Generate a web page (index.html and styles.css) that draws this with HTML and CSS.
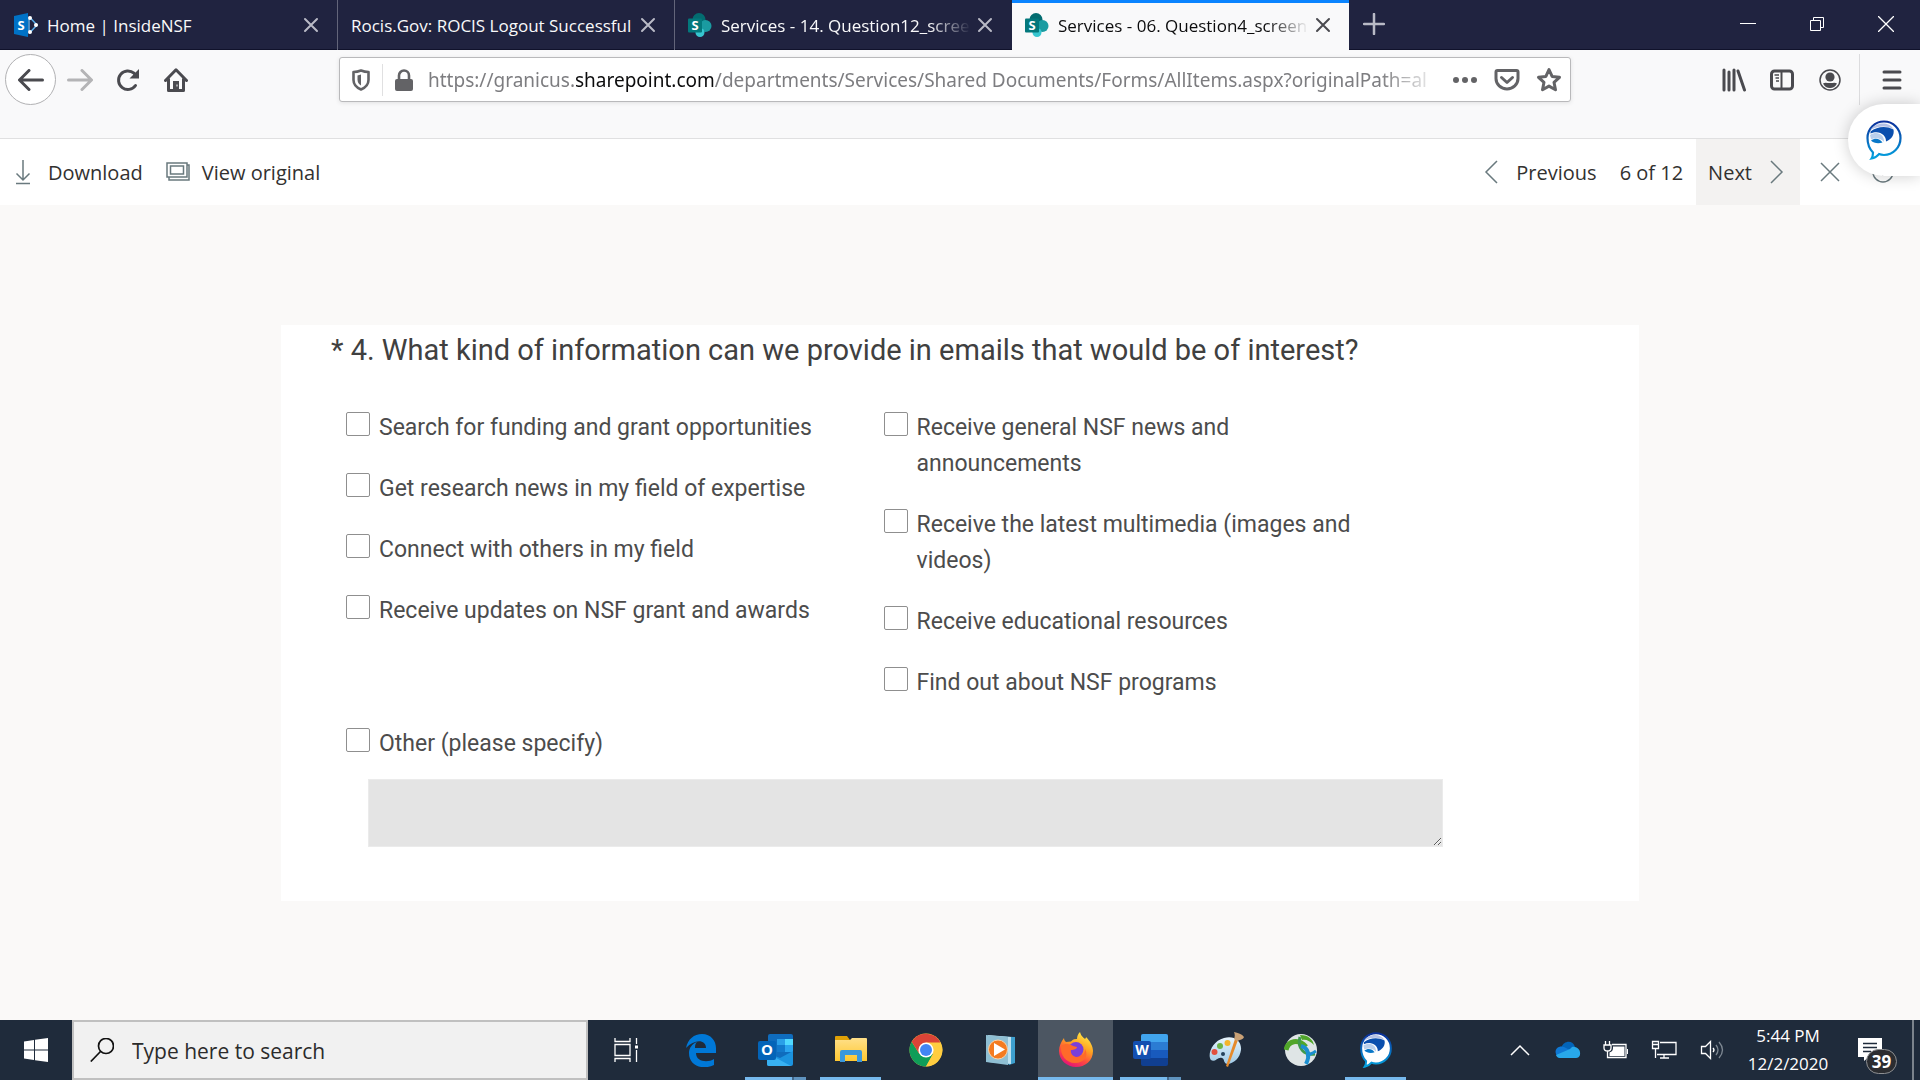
FILE: index.html
```html
<!DOCTYPE html>
<html lang="en">
<head>
<meta charset="utf-8">
<meta name="viewport" content="width=device-width, initial-scale=1">
<title>Services - 06. Question4_screen</title>
<link rel="stylesheet" href="styles.css">
</head>
<body>
<svg class="sprite" aria-hidden="true">
  <defs>
    <linearGradient id="bubble-ring" x1="0" y1="0" x2="0" y2="1"><stop offset="0" stop-color="#0b2f9b"/><stop offset="1" stop-color="#04a3e0"/></linearGradient>
    <linearGradient id="fox" x1="0.8" y1="0" x2="0.3" y2="1"><stop offset="0" stop-color="#fff04a"/><stop offset="0.4" stop-color="#ffa321"/><stop offset="0.7" stop-color="#ff4a40"/><stop offset="1" stop-color="#e2107b"/></linearGradient>
    <linearGradient id="folder" x1="0" y1="0" x2="0" y2="1"><stop offset="0" stop-color="#ffe08a"/><stop offset="1" stop-color="#ffc830"/></linearGradient>
    <linearGradient id="palette" x1="0" y1="0" x2="0" y2="1"><stop offset="0" stop-color="#e8f5fd"/><stop offset="1" stop-color="#9fc9e6"/></linearGradient>
  </defs>
  <symbol id="sharepoint" viewBox="0 0 24 24">
    <circle cx="11" cy="6.500" r="6.500" fill="#036c70"/><circle cx="17.500" cy="13" r="6" fill="#1a9ba1"/><circle cx="12" cy="19.500" r="4.500" fill="#37c6d0"/>
    <rect x="0" y="5.500" width="14" height="14" rx="1" fill="#03787c"/>
  </symbol>
  <symbol id="close" viewBox="0 0 16 16"><path d="M2 2l12 12M14 2L2 14" fill="none" stroke="currentColor" stroke-width="2" stroke-linecap="round"/></symbol>
  <symbol id="bubble" viewBox="0 0 36 40">
    <path d="M18 1.500C27 1.500 34.500 8.500 34.500 18S27 35 18 35c-2 0-3.600-.300-5-.900C11 36.500 8.600 38 5.500 38.500c1-1.500 1.500-3.500 1.500-6C3.500 29 1.500 24 1.500 18 1.500 8.500 9 1.500 18 1.500z" fill="#fff" stroke="url(#bubble-ring)" stroke-width="2.200"/>
    <path d="M4.500 10C8 3 22 0 27.500 9 20 5 11 6 4.500 10z" fill="#b4c1e6"/>
    <path d="M4.500 11.500C11 6.500 20 5.500 27.500 9.500c1 5-1.500 9.500-7.500 12C20.500 15 13 9.500 4.500 13.500z" fill="#0b4fae"/>
    <path d="M4 15c7-4.500 14.500-.500 14 7-3.500-4.500-9-4.500-13-2.500z" fill="#b9cfec"/>
    <path d="M5 20.500c4-3 9-2 11.500 2-4 1.500-9 .800-11.500-2z" fill="#0a78c8"/>
  </symbol>
</svg>

<header class="titlebar">
  <div class="tabs" role="tablist" aria-label="Open tabs">
    <div class="tab">
      <svg class="favicon" viewBox="0 0 24 24" aria-hidden="true"><path d="M0 3L14 0v24L0 21z" fill="#0072c6"/><path d="M15 3.500l8 8.500-8 8.500M15 6v12" fill="none" stroke="#5ab0ee" stroke-width="1.500"/><circle cx="16" cy="5" r="2" fill="#fff"/><circle cx="22" cy="12" r="2" fill="#fff"/><circle cx="16" cy="19" r="2" fill="#fff"/><text x="7" y="17" text-anchor="middle" class="glyph-s">S</text></svg>
      <button class="tab-title" role="tab" aria-selected="false">Home | InsideNSF</button>
      <button class="tab-close" aria-label="Close tab"><svg width="16" height="16"><use href="#close"/></svg></button>
    </div>
    <div class="tab">
      <button class="tab-title" role="tab" aria-selected="false">Rocis.Gov: ROCIS Logout Successful</button>
      <button class="tab-close" aria-label="Close tab"><svg width="16" height="16"><use href="#close"/></svg></button>
    </div>
    <div class="tab">
      <svg class="favicon" aria-hidden="true"><use href="#sharepoint"/><text x="7" y="17" text-anchor="middle" class="glyph-s">S</text></svg>
      <button class="tab-title fade" role="tab" aria-selected="false">Services - 14. Question12_scree</button>
      <button class="tab-close" aria-label="Close tab"><svg width="16" height="16"><use href="#close"/></svg></button>
    </div>
    <div class="tab active">
      <svg class="favicon" aria-hidden="true"><use href="#sharepoint"/><text x="7" y="17" text-anchor="middle" class="glyph-s">S</text></svg>
      <button class="tab-title fade" role="tab" aria-selected="true">Services - 06. Question4_screen</button>
      <button class="tab-close" aria-label="Close tab"><svg width="16" height="16"><use href="#close"/></svg></button>
    </div>
  </div>
  <button class="new-tab" aria-label="New tab"><svg width="22" height="22" viewBox="0 0 22 22"><path d="M11 1v20M1 11h20" stroke="currentColor" stroke-width="2.500" stroke-linecap="round"/></svg></button>
  <div class="window-buttons">
    <button aria-label="Minimize"><svg width="16" height="16" viewBox="0 0 16 16"><path d="M0 7.500h16" stroke="#fff"/></svg></button>
    <button aria-label="Restore"><svg width="16" height="16" viewBox="0 0 16 16"><path d="M1.500 4.500h10v10h-10zM4.500 4V1.500h10v10H12" fill="none" stroke="#fff"/></svg></button>
    <button aria-label="Close window"><svg width="16" height="16" viewBox="0 0 16 16"><path d="M0 0l16 16M16 0L0 16" stroke="#fff" stroke-width="1.300"/></svg></button>
  </div>
</header>

<nav class="navbar" aria-label="Browser toolbar">
  <div class="nav-left">
    <button class="back" aria-label="Back"><svg width="26" height="22" viewBox="0 0 26 22"><path d="M11 1.500L1.500 11l9.500 9.500M2 11h22.500" class="line"/></svg></button>
    <button class="tool dim" aria-label="Forward"><svg width="26" height="22" viewBox="0 0 26 22"><path d="M15 1.500l9.500 9.500-9.500 9.500M24 11H1.500" class="line"/></svg></button>
    <button class="tool" aria-label="Reload"><svg width="24" height="24" viewBox="0 0 24 24"><path d="M19.500 17.500A9.300 9.300 0 1 1 18 5.200L21 8.500" class="line"/><path d="M23 1v9.500h-9.500z" fill="currentColor"/></svg></button>
    <button class="tool" aria-label="Home"><svg width="24" height="24" viewBox="0 0 24 24"><path d="M1.500 12.500L12 1.800l10.500 10.700M4.500 11v11.500h15V11" class="line"/><path d="M9 13h6v9H9z" fill="currentColor"/><path d="M12.500 17.500h1" stroke="#fff" stroke-width="2"/></svg></button>
  </div>
  <div class="address">
    <button class="addr-btn" aria-label="Tracking protection"><svg width="18" height="22" viewBox="0 0 18 22"><path d="M9 1.500c2.500 1 5 1.500 7.500 1.500v8c0 4-3 7.500-7.500 9.500C4.500 18.500 1.500 15 1.500 11V3C4 3 6.500 2.500 9 1.500z" fill="none" stroke="currentColor" stroke-width="2.600" stroke-linejoin="round"/><path d="M9 5.500v11c-2.500-1.500-3.500-3.500-3.500-6v-4z" fill="currentColor"/></svg></button>
    <span class="addr-sep"></span>
    <button class="addr-btn" aria-label="Site security"><svg width="18" height="22" viewBox="0 0 18 22"><rect y="10" width="18" height="12" rx="2" fill="currentColor"/><path d="M4 11V6.500a5 5 0 0 1 10 0V11" fill="none" stroke="currentColor" stroke-width="2.600"/></svg></button>
    <div class="url" role="textbox" aria-label="Address" tabindex="0">https://granicus.<b>sharepoint.com</b>/departments/Services/Shared Documents/Forms/AllItems.aspx?originalPath=al</div>
    <button class="addr-btn" aria-label="Page actions"><svg width="26" height="8" viewBox="0 0 26 8"><g fill="currentColor"><circle cx="4" cy="4" r="3"/><circle cx="13" cy="4" r="3"/><circle cx="22" cy="4" r="3"/></g></svg></button>
    <button class="addr-btn" aria-label="Save to Pocket"><svg width="26" height="24" viewBox="0 0 26 24"><path d="M3.500 2.500h19a1.500 1.500 0 0 1 1.500 1.500v6.500a11 10.500 0 0 1-22 0V4a1.500 1.500 0 0 1 1.500-1.500z" class="line"/><path d="M7.500 9.500l5.500 5 5.500-5" class="line"/></svg></button>
    <button class="addr-btn" aria-label="Bookmark"><svg width="26" height="26" viewBox="0 0 26 26"><path d="M13 2.500l3.100 6.900 7.400.9-5.500 5 1.500 7.500L13 19.100l-6.500 3.700L8 15.300l-5.500-5 7.400-.9z" class="line"/></svg></button>
  </div>
  <div class="nav-right">
    <button class="tool" aria-label="Library"><svg width="24" height="24" viewBox="0 0 24 24"><path d="M2 2v20M7 4v18M12 2v20M16 3l6.500 19" class="line"/></svg></button>
    <button class="tool" aria-label="Sidebars"><svg width="24" height="24" viewBox="0 0 24 24"><rect x="1.500" y="3" width="21" height="18" rx="3" class="line"/><path d="M11.500 3v18" stroke="currentColor" stroke-width="2"/><path d="M4.500 7h4.500M5.500 10h3.500M6 13h3" stroke="currentColor" stroke-width="1.500"/></svg></button>
    <button class="tool" aria-label="Account"><svg width="24" height="24" viewBox="0 0 24 24"><circle cx="12" cy="12" r="10" fill="none" stroke="currentColor" stroke-width="1.500"/><circle cx="12" cy="9" r="4.600" fill="currentColor"/><path d="M5 15.500c2-1.500 4-.5 7-.5s5-1 7 .5C17.500 18.500 15 20 12 20s-5.500-1.500-7-4.500z" fill="currentColor"/></svg></button>
    <span class="nav-sep"></span>
    <button class="tool" aria-label="Menu"><svg width="20" height="20" viewBox="0 0 20 20"><path d="M2 2h16M2 10h16M2 18h16" class="line"/></svg></button>
  </div>
</nav>

<div class="commands" role="toolbar" aria-label="File commands">
  <button class="command"><svg width="24" height="26" viewBox="0 0 24 26"><path d="M11 1v20M4.500 14.500L11 21l6.500-6.500M4 24.500h14" class="thin"/></svg>Download</button>
  <button class="command"><svg width="24" height="24" viewBox="0 0 24 24"><path d="M1 3h20v14H1zM4.500 6h13v8h-13zM3 17v3h20V5h-2" class="thin"/></svg>View original</button>
  <div class="pager">
    <button class="command"><svg width="24" height="24" viewBox="0 0 24 24"><path d="M17 1L6 12l11 11" class="thin"/></svg>Previous</button>
    <span class="count">6 of 12</span>
    <button class="command next">Next<svg width="24" height="24" viewBox="0 0 24 24"><path d="M7 1l11 11L7 23" class="thin"/></svg></button>
    <button class="command small" aria-label="Close preview"><svg width="20" height="20" viewBox="0 0 20 20"><path d="M1 1l18 18M19 1L1 19" class="thin"/></svg></button>
    <button class="command small" aria-label="Information"><svg width="22" height="22" viewBox="0 0 22 22"><circle cx="11" cy="11" r="10" class="thin"/><path d="M11 9v6" class="thin"/></svg></button>
  </div>
</div>

<main class="viewer">
  <form class="survey">
    <h1 class="question">* 4. What kind of information can we provide in emails that would be of interest?</h1>
    <div class="answers">
      <div class="columns">
        <div class="column">
          <label class="option"><input type="checkbox"><span>Search for funding and grant opportunities</span></label>
          <label class="option"><input type="checkbox"><span>Get research news in my field of expertise</span></label>
          <label class="option"><input type="checkbox"><span>Connect with others in my field</span></label>
          <label class="option"><input type="checkbox"><span>Receive updates on NSF grant and awards</span></label>
        </div>
        <div class="column">
          <label class="option"><input type="checkbox"><span>Receive general NSF news and announcements</span></label>
          <label class="option"><input type="checkbox"><span>Receive the latest multimedia (images and videos)</span></label>
          <label class="option"><input type="checkbox"><span>Receive educational resources</span></label>
          <label class="option"><input type="checkbox"><span>Find out about NSF programs</span></label>
        </div>
      </div>
      <label class="option"><input type="checkbox"><span id="other">Other (please specify)</span></label>
      <textarea class="other-text" aria-labelledby="other"></textarea>
    </div>
  </form>
</main>

<footer class="taskbar">
  <button class="start" aria-label="Start"><svg width="24" height="24" viewBox="0 0 24 24"><path d="M0 3.500L10 2v9.500H0zM11 1.800L24 0v11.500H11zM0 12.500h10V22L0 20.500zM11 12.500h13V24l-13-1.800z" fill="#fff"/></svg></button>
  <label class="search">
    <svg width="24" height="24" viewBox="0 0 24 24" aria-hidden="true"><circle cx="16" cy="8" r="7.500" fill="none" stroke="#111" stroke-width="1.700"/><path d="M10.500 13.500L.8 23.500" stroke="#111" stroke-width="1.700"/></svg>
    <input type="search" placeholder="Type here to search" aria-label="Type here to search">
  </label>
  <div class="apps">
    <button class="app" aria-label="Task View"><svg width="26" height="26" viewBox="0 0 26 26"><path d="M2 1v3.500h15V1M2 7.500h15v11H2zM2 25v-3.500h15V25M23.500 1v6M23.500 13v12" fill="none" stroke="#fff" stroke-width="1.300"/><path d="M22 8.500h3v3h-3z" fill="#fff"/></svg></button>
    <button class="app" aria-label="Edge"><svg width="32" height="34" viewBox="0 0 32 34"><path d="M1 15C3 6 9 1 17 1c9 0 14 7 14 14v5H11c0 9 12 10 18 6v6c-10 5-25 2-25-12 0-5 3-9 8-11-2 2-2 4-2 6h11c0-9-12-9-20 0z" fill="#0078d7"/></svg></button>
    <button class="app running multi" aria-label="Outlook"><svg width="36" height="34" viewBox="0 0 36 34"><rect x="10" y="1" width="25" height="31" rx="2" fill="#0f6cbd"/><path d="M19 6h8v6h-8z" fill="#2a9fe8"/><path d="M27 6h8v6h-8z" fill="#50d9ff"/><path d="M19 12h8v7h-8z" fill="#1279cc"/><path d="M27 12h8v7h-8z" fill="#2aa4ef"/><path d="M9 20l13 5 13-7v13q0 2-2 2H11q-2 0-2-2z" fill="#1b93df"/><path d="M9 20l24 13h-22q-2 0-2-2z" fill="#38b1f2"/><rect y="8" width="18" height="19" rx="2" fill="#0364b8"/><text x="9" y="22" text-anchor="middle" class="glyph-l">O</text></svg></button>
    <button class="app running" aria-label="File Explorer"><svg width="34" height="30" viewBox="0 0 34 30"><path d="M1 2q0-1 1-1h11l3 4H1z" fill="#e0a106"/><path d="M1 5h15l2-2h14q1 0 1 1v22H1z" fill="url(#folder)"/><path d="M6 27V17q0-2 2-2h18q2 0 2 2v10h-5v-7H11v7z" fill="#3b98dd"/></svg></button>
    <button class="app" aria-label="Chrome"><svg width="34" height="34" viewBox="0 0 34 34"><circle cx="17" cy="17" r="16.500" fill="#ffcd40"/><path d="M2.700 8.700A16.500 16.500 0 0 0 17 33.500L24 21l-7-4-6.500 4z" fill="#0f9d58"/><path d="M31.300 9A16.500 16.500 0 0 1 17 33.500L24 21V9z" fill="#ffcd40"/><path d="M2.700 8.700A16.500 16.500 0 0 1 31.500 9.500H17L10.500 21z" fill="#db4437"/><circle cx="17" cy="17" r="7.600" fill="#fff"/><circle cx="17" cy="17" r="6" fill="#4285f4"/></svg></button>
    <button class="app" aria-label="Media Player"><svg width="32" height="32" viewBox="0 0 32 32"><path d="M6 2l24 1v26l-6 2z" fill="#3ea0cf"/><path d="M3 1l23 2v27L3 28z" fill="#bfe1ef"/><path d="M1 1l22 2v28L1 28z" fill="#8fbfd3"/><circle cx="13" cy="15.500" r="9.500" fill="#f47b20" stroke="#fbd3a8"/><path d="M9 9l11 6.500L9 22z" fill="#fff"/></svg></button>
    <button class="app running current" aria-label="Firefox"><svg width="36" height="36" viewBox="0 0 36 36"><path d="M6 6c0 2 1 3 2 4l5-.5C15 7 18 7 19 7c0-3 1-5 3-7 1 4 3 5 5 7 1-1 1-2 1-2 4 4 7 9 7 14 0 10-8 16-17 16S1 28 1 19c0-5 2-9 5-13z" fill="url(#fox)"/><circle cx="18" cy="17.500" r="7.500" fill="#7a3fd8"/><path d="M3 14c4-3 9-2 12 0l4 1c0 2-3 3-6 3-1 4 3 8 8 7 4-1 6-4 6-8 4 7-1 14-10 14C8 31 2 23 3 14z" fill="#ff6a2a"/></svg></button>
    <button class="app running multi" aria-label="Word"><svg width="36" height="34" viewBox="0 0 36 34"><rect x="8" y="1" width="27" height="32" rx="2" fill="#103f91"/><path d="M8 9h27v8H8z" fill="#2b7cd3"/><path d="M8 17h27v8H8z" fill="#185abd"/><path d="M10 1h23q2 0 2 2v6H8V3q0-2 2-2z" fill="#41a5ee"/><rect y="8" width="18" height="18" rx="2" fill="#134fb0"/><text x="9" y="22" text-anchor="middle" class="glyph-m">W</text></svg></button>
    <button class="app" aria-label="Paint"><svg width="36" height="36" viewBox="0 0 36 36"><path d="M16 6C26 3 34 9 33 18c-1 8-7 13-13 14-5 0-3-5-6-6-4-2-7 5-11 2C-1 23 4 9 16 6z" fill="url(#palette)"/><circle cx="15" cy="22" r="2" fill="#24425c"/><circle cx="6.500" cy="20" r="3" fill="#e2503f"/><circle cx="12" cy="14" r="3" fill="#6cb446"/><circle cx="19.500" cy="11" r="3" fill="#f4b52c"/><path d="M30 8L20 35l-2-1L27 7z" fill="#e58a2c"/><path d="M26 0c4 1 8 2 10 5-1 3-5 3-7 4l-3-2c1-2 1-5 0-7z" fill="#c9a176"/></svg></button>
    <button class="app" aria-label="AnyConnect"><svg width="34" height="34" viewBox="0 0 34 34"><circle cx="17" cy="17" r="16" fill="#dfe5e6"/><path d="M2 17C4 8 14 5 22 14" fill="none" stroke="#51a62a" stroke-width="5"/><path d="M16 2c9 0 13 5 14 10-4-4-8-6-12-5z" fill="#51a62a"/><path d="M16 4c-3 11 4 19 15 17" fill="none" stroke="#3f9a4c" stroke-width="3"/><path d="M17 13c8 2 9 10 5 18" fill="none" stroke="#1c8fd0" stroke-width="4"/><path d="M22 22c4 0 7-2 10-4" fill="none" stroke="#1c8fd0" stroke-width="3"/></svg></button>
    <button class="app running" aria-label="Jabber"><svg width="34" height="36"><use href="#bubble"/></svg></button>
  </div>
  <div class="tray">
    <button aria-label="Show hidden icons"><svg width="20" height="12" viewBox="0 0 20 12"><path d="M1 11l9-9 9 9" fill="none" stroke="#fff" stroke-width="1.500"/></svg></button>
    <button aria-label="OneDrive"><svg width="26" height="18" viewBox="0 0 26 18"><path d="M6 7c3-8 12-8 14-1l-8 6z" fill="#0364b8"/><path d="M1 13C-1 8 4 4 9 6l10 5-9 5-4 1q-4 0-5-4z" fill="#0f78d4"/><path d="M17 6c5-1 9 3 8 8q-1 3-4 3H5q-3 0-4-3l14-6z" fill="#28a8ea"/></svg></button>
    <button aria-label="Battery"><svg width="26" height="20" viewBox="0 0 26 20"><path d="M9 4.500h14v13H6M2.500 1v4M6.500 1v4M1 5h7v3q0 3-3.500 3T1 8zM4.500 11v6.500H7" fill="none" stroke="#fff" stroke-width="1.300"/><path d="M10 6.500h11.500V16H6.500v-3.500Q10 11.500 10 8zM24 9h1v5h-1z" fill="#fff"/></svg></button>
    <button aria-label="Network"><svg width="26" height="20" viewBox="0 0 26 20"><path d="M9 2.500h16v12H6M1.500 1.500h6v7h-6zM4.500 9v9M13 15v3M9 18h9M2 4.500h5" fill="none" stroke="#fff" stroke-width="1.300"/></svg></button>
    <button aria-label="Volume"><svg width="24" height="20" viewBox="0 0 24 20"><path d="M1.500 6.500h4l5-5v17l-5-5h-4z" fill="none" stroke="#fff" stroke-width="1.300"/><path d="M13 8q2 2 0 4" fill="none" stroke="#fff" stroke-width="1.300"/><path d="M16 5q4 5 0 10M19 2q7 8 0 16" fill="none" stroke="#7d8791" stroke-width="1.300"/></svg></button>
    <button class="clock"><span>5:44 PM</span><span>12/2/2020</span></button>
    <button class="notices" aria-label="39 notifications"><svg width="24" height="24" viewBox="0 0 24 24"><path d="M0 0h24v19H11l-5 4v-4H0z" fill="#fff"/><path d="M5 5.500h14M5 9.500h14M5 13.500h8" stroke="#1f2b3b" stroke-width="1.300"/></svg><span class="badge">39</span></button>
    <button class="desktop" aria-label="Show desktop"></button>
  </div>
</footer>

<button class="chat" aria-label="Open chat"><svg width="36" height="40"><use href="#bubble"/></svg></button>
</body>
</html>
```
FILE: styles.css
```css
* { box-sizing: border-box; }

body {
  margin: 0;
  min-height: 100vh;
  display: flex;
  flex-direction: column;
  font-family: "Open Sans", "Noto Sans", sans-serif;
  font-size: 20px;
  color: #323130;
  background: #faf9f8;
}

button {
  display: flex;
  align-items: center;
  justify-content: center;
  flex: none;
  margin: 0;
  padding: 0;
  border: 0;
  background: none;
  color: inherit;
  font: inherit;
}

svg { display: block; flex: none; }
.sprite { position: absolute; width: 0; height: 0; }
.line { fill: none; stroke: currentColor; stroke-width: 3; stroke-linecap: round; stroke-linejoin: round; }
.thin { fill: none; stroke: #69797e; stroke-width: 1.5; }
.glyph-s, .glyph-m, .glyph-l { font-family: "Open Sans", sans-serif; font-weight: 700; fill: #fff; }
.glyph-s { font-size: 13px; }
.glyph-m { font-size: 14px; }
.glyph-l { font-size: 15px; }

/* Tab strip */
.titlebar {
  display: flex;
  height: 50px;
  background: #202340;
  color: #f9f9fa;
  box-shadow: inset 0 -1px #10122b;
}
.tabs { display: flex; padding-left: 1px; min-width: 0; }
.tab {
  display: flex;
  align-items: center;
  width: 337px;
  min-width: 0;
  padding: 0 12px 0 13px;
  border-right: 1px solid #63657a;
  font-size: 17px;
}
.tab:nth-child(3) { border-right-color: transparent; }
.tab.active {
  background: #f9f9fa;
  border-right: 0;
  border-top: 3px solid #0a84ff;
  padding-bottom: 3px;
  color: #0c0c0d;
}
.favicon { width: 24px; height: 24px; margin-right: 9px; }
.tab-title {
  flex: 1;
  min-width: 0;
  justify-content: flex-start;
  overflow: hidden;
  white-space: nowrap;
}
.fade { mask-image: linear-gradient(to left, transparent, #000 42px); }
.tab-close { width: 28px; height: 28px; color: #b9bac6; }
.active .tab-close { color: #4a4a4f; }
.new-tab { width: 50px; height: 48px; color: #b9bac6; }
.window-buttons { display: flex; margin-left: auto; height: 48px; }
.window-buttons button { width: 69px; }

/* Address row */
.navbar {
  display: flex;
  align-items: flex-start;
  height: 89px;
  padding-top: 4px;
  background: #f9f9fa;
  border-bottom: 1px solid #e0e0e1;
  color: #4a4a4f;
}
.nav-left { display: flex; width: 339px; padding-left: 5px; flex: none; }
.nav-right { display: flex; justify-content: flex-end; width: 349px; padding-right: 4px; flex: none; }
.back { width: 51px; height: 51px; border: 1px solid #b1b1b3; border-radius: 50%; background: #fff; }
.tool { width: 48px; height: 51px; }
.dim { color: #b4b4b6; }
.nav-sep { width: 1px; height: 51px; margin: 0 8px 0 5px; background: #dcdcde; }
.address {
  display: flex;
  align-items: center;
  flex: 1;
  min-width: 0;
  height: 45px;
  margin-top: 3px;
  background: #fff;
  border: 1px solid #b9b9bb;
  border-radius: 3px;
  box-shadow: 0 1px 4px #0000001a;
  color: #636366;
}
.addr-btn { width: 42px; height: 42px; }
.addr-sep { width: 1px; height: 32px; background: #e0e0e1; }
.url {
  flex: 1;
  min-width: 0;
  margin-left: 3px;
  margin-right: 4px;
  overflow: hidden;
  white-space: nowrap;
  font-family: "Noto Sans", "Open Sans", sans-serif;
  font-size: 19px;
  color: #7d7d80;
  mask-image: linear-gradient(to left, transparent, #000 60px);
}
.url b { font-weight: 400; color: #0c0c0d; }

/* File command row */
.commands { display: flex; height: 66px; padding-left: 12px; background: #fff; }
.command { gap: 12px; margin-right: 23px; white-space: nowrap; }
.pager { display: flex; align-items: center; margin-left: auto; padding-right: 14px; }
.pager .command { height: 100%; }
.pager .next { padding: 0 12px; margin: 0 0 0 13px; background: #f3f2f1; gap: 12px; }
.pager .small { width: 60px; margin: 0; }
.pager .small:last-child { width: 46px; }

/* Survey sheet */
.viewer { flex: 1; display: flex; align-items: center; justify-content: center; }
.survey {
  width: 100%;
  max-width: 1358px;
  padding: 4px 0 54px;
  background: #fff;
  font-family: Roboto, "Noto Sans", sans-serif;
  font-size: 23px;
  line-height: 36px;
  color: #4c4c4c;
}
.question {
  margin: 0 50px 39px;
  font-size: 29px;
  line-height: 42px;
  font-weight: 400;
  color: #404040;
}
.answers { display: flex; flex-direction: column; gap: 25px; margin: 0 196px 0 65px; }
.columns { display: grid; grid-template-columns: 49fr 51fr; }
.column { display: flex; flex-direction: column; gap: 25px; }
.option { display: flex; align-items: flex-start; gap: 9px; }
.option input {
  appearance: none;
  flex: none;
  width: 24px;
  height: 24px;
  margin: 2px 0 0;
  border: 1px solid #8f8f8f;
  border-radius: 2px;
  background: #fff;
}
.option span { max-width: 460px; }
.other-text {
  height: 68px;
  margin: -8px 0 0 22px;
  border: 1px solid #ebebeb;
  background: #e4e4e4;
  font: inherit;
}

/* Taskbar */
.taskbar { display: flex; height: 60px; background: #1f2b3b; color: #fff; }
.start { width: 72px; }
.search {
  display: flex;
  align-items: center;
  gap: 18px;
  width: 516px;
  padding: 0 16px;
  border: 2px solid #c0c0c0;
  background: #f1f1f1;
}
.search input {
  flex: 1;
  min-width: 0;
  padding: 2px 0 0;
  border: 0;
  background: none;
  font: inherit;
  font-size: 21px;
  outline: 0;
}
.search input::placeholder { color: #2b2b2b; opacity: 1; }
.apps { display: flex; }
.app { width: 75px; }
.running {
  background: linear-gradient(#76b9ed, #76b9ed) 7px 100% / 61px 3px no-repeat;
}
.running.multi {
  background:
    linear-gradient(to right, #76b9ed 47px, #44688a 47px 49px, #5f93bf 49px) 7px 100% / 61px 3px no-repeat;
}
.running.current {
  background: linear-gradient(#76b9ed, #76b9ed) 0 100% / 100% 3px no-repeat, #4c5662;
}
.tray { display: flex; margin-left: auto; }
.tray button { width: 48px; }
.tray .clock { width: 104px; flex-direction: column; font-size: 17px; line-height: 28px; }
.tray .notices { position: relative; width: 72px; padding-right: 12px; }
.badge {
  position: absolute;
  left: 26px;
  top: 29px;
  width: 31px;
  height: 25px;
  border: 1px solid #8d8f92;
  border-radius: 13px;
  background: #2b2d31;
  font-size: 17px;
  line-height: 23px;
  font-weight: 700;
  text-align: center;
}
.tray .desktop { width: 8px; border-left: 2px solid #7b838c; }

/* Floating chat launcher */
.chat {
  position: absolute;
  right: 0;
  top: 104px;
  width: 72px;
  height: 72px;
  border-radius: 36px 0 0 36px;
  background: #fff;
  box-shadow: 0 0 16px #00000033;
}
```
